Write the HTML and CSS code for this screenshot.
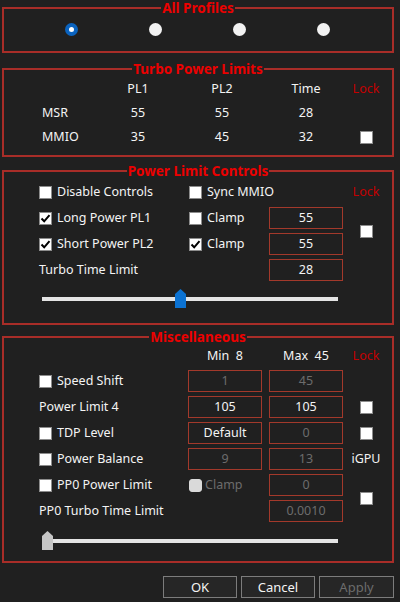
FILE: index.html
```html
<!DOCTYPE html>
<html>
<head>
<meta charset="utf-8">
<title>Power Settings</title>
<link rel="stylesheet" href="styles.css">
</head>
<body>
<div class="app">
  <fieldset class="group g-profiles">
    <legend>All Profiles</legend>
    <div class="radios">
      <span class="radio on"></span>
      <span class="radio"></span>
      <span class="radio"></span>
      <span class="radio"></span>
    </div>
  </fieldset>

  <fieldset class="group g-turbo">
    <legend>Turbo Power Limits</legend>
    <div class="tgrid">
      <span></span><span class="c">PL1</span><span class="c">PL2</span><span class="c">Time</span><span class="c lock">Lock</span>
      <span>MSR</span><span class="c">55</span><span class="c">55</span><span class="c">28</span><span></span>
      <span>MMIO</span><span class="c">35</span><span class="c">45</span><span class="c">32</span><span class="c"><span class="cb"></span></span>
    </div>
  </fieldset>

  <fieldset class="group g-controls">
    <legend>Power Limit Controls</legend>
    <div class="pgrid">
      <label class="chk"><span class="cb"></span>Disable Controls</label>
      <label class="chk span2"><span class="cb"></span>Sync MMIO</label>
      <span class="c lock">Lock</span>

      <label class="chk"><span class="cb on"><svg viewBox="0 0 11 11" width="11" height="11"><path d="M1.5 5.5 L4.2 8.3 L9.5 2.2" fill="none" stroke="#000" stroke-width="2"/></svg></span>Long Power PL1</label>
      <label class="chk"><span class="cb"></span>Clamp</label>
      <span class="field">55</span>
      <span class="c lockbox"><span class="cb"></span></span>

      <label class="chk"><span class="cb on"><svg viewBox="0 0 11 11" width="11" height="11"><path d="M1.5 5.5 L4.2 8.3 L9.5 2.2" fill="none" stroke="#000" stroke-width="2"/></svg></span>Short Power PL2</label>
      <label class="chk"><span class="cb on"><svg viewBox="0 0 11 11" width="11" height="11"><path d="M1.5 5.5 L4.2 8.3 L9.5 2.2" fill="none" stroke="#000" stroke-width="2"/></svg></span>Clamp</label>
      <span class="field">55</span>

      <span class="txt span2">Turbo Time Limit</span>
      <span class="field">28</span>
      <span></span>

      <div class="slider full">
        <div class="track"></div>
        <svg class="thumb blue" width="11" height="19" viewBox="0 0 11 19"><path d="M0 5 L5.5 0 L11 5 V19 H0 Z"/></svg>
      </div>
    </div>
  </fieldset>

  <fieldset class="group g-misc">
    <legend>Miscellaneous</legend>
    <div class="mgrid">
      <span></span><span class="c hdr">Min  8</span><span class="c hdr">Max  45</span><span class="c lock">Lock</span>

      <label class="chk"><span class="cb"></span>Speed Shift</label>
      <span class="field dis">1</span><span class="field dis">45</span><span></span>

      <span class="txt">Power Limit 4</span>
      <span class="field">105</span><span class="field">105</span><span class="c"><span class="cb"></span></span>

      <label class="chk"><span class="cb"></span>TDP Level</label>
      <span class="field">Default</span><span class="field dis">0</span><span class="c"><span class="cb"></span></span>

      <label class="chk"><span class="cb"></span>Power Balance</label>
      <span class="field dis">9</span><span class="field dis">13</span><span class="c">iGPU</span>

      <label class="chk"><span class="cb"></span>PP0 Power Limit</label>
      <label class="chk dis-chk"><span class="cb off"></span>Clamp</label>
      <span class="field dis">0</span>
      <span class="c lockbox"><span class="cb"></span></span>

      <span class="txt span2">PP0 Turbo Time Limit</span>
      <span class="field dis">0.0010</span>

      <div class="slider full">
        <div class="track"></div>
        <svg class="thumb gray" width="11" height="19" viewBox="0 0 11 19"><path d="M0 5 L5.5 0 L11 5 V19 H0 Z"/></svg>
      </div>
    </div>
  </fieldset>

  <div class="buttons">
    <button class="btn">OK</button>
    <button class="btn">Cancel</button>
    <button class="btn apply" disabled>Apply</button>
  </div>
</div>
</body>
</html>
```

FILE: styles.css
```css
* { box-sizing: border-box; }
html, body { margin: 0; padding: 0; background: #202020; }
body {
  width: 400px;
  height: 602px;
  overflow: hidden;
  font-family: "Noto Sans", "Open Sans", sans-serif;
  font-size: 12.5px;
  line-height: 16px;
  color: #f4f4f4;
}
.app { margin-left: 2px; padding-top: 1px; width: 392px; }

.group {
  margin: 0;
  padding: 0;
  min-width: 0;
  border: 2px solid #a82d28;
}
.group legend {
  margin: 0 auto;
  padding: 0 1px;
  font-family: "Noto Sans", sans-serif;
  font-weight: bold;
  font-size: 13.5px;
  line-height: 14px;
  color: #ec0000;
}

.g-profiles { padding: 8px 0 15px; }
.radios {
  display: flex;
  justify-content: space-between;
  padding: 0 62px 0 61px;
}
.radio {
  width: 13px;
  height: 13px;
  border-radius: 50%;
  background: #f2f2f2;
  display: flex;
  align-items: center;
  justify-content: center;
}
.radio.on { background: #0a63bf; }
.radio.on::after {
  content: "";
  width: 5px;
  height: 5px;
  border-radius: 50%;
  background: #fff;
}

.g-turbo { margin-top: 9px; padding: 1px 0 6px 0; }
.tgrid {
  display: grid;
  margin-left: 38px;
  grid-template-columns: 54px 84px 84px 84px 36px;
  grid-auto-rows: 24px;
  align-items: center;
}
.c { text-align: center; display: flex; justify-content: center; align-items: center; }
.lock { color: #c40000; }

.cb {
  width: 13px;
  height: 13px;
  flex: none;
  background: #fff;
  border: 1px solid #8c8c8c;
  display: inline-flex;
  align-items: center;
  justify-content: center;
}
.cb svg { display: block; }
.cb.off { background: #dadada; border-color: #dadada; border-radius: 3px; }

.chk { display: flex; align-items: center; gap: 5px; white-space: nowrap; }
.dis-chk { color: #6c6c6c; margin-left: 1px; gap: 3px; }
.txt { white-space: nowrap; }

.field {
  height: 22px;
  border: 1px solid #a3392b;
  text-align: center;
  line-height: 20px;
  white-space: nowrap;
}
.field.dis { color: #6c6c6c; }

.g-controls { margin-top: 7px; padding: 1px 0 10px 0; }
.pgrid {
  display: grid;
  margin-left: 35px;
  grid-template-columns: 143px 73px 74px 32px;
  column-gap: 7px;
  grid-template-rows: 26px 26px 26px 26px 30px;
  align-items: center;
}
.span2 { grid-column: span 2; }
.g-controls .lockbox { grid-row: 2 / 4; grid-column: 4; }
.full { grid-column: 1 / -1; }

.slider { position: relative; height: 19px; }
.track {
  position: absolute;
  left: 3px;
  top: 8px;
  width: 296px;
  height: 4px;
  background: #e4e4e4;
}
.thumb { position: absolute; top: 0; }
.thumb.blue { left: 136px; fill: #0b72d2; }
.thumb.gray { left: 3px; fill: #c6c6c6; }

.g-misc { margin-top: 5px; padding: 0 0 5px 0; }
.mgrid {
  display: grid;
  margin-left: 35px;
  grid-template-columns: 142px 74px 74px 32px;
  column-gap: 7px;
  grid-template-rows: 24px repeat(6, 26px) 32px;
  align-items: center;
}
.hdr { white-space: pre; }
.g-misc .lockbox { grid-row: 6 / 8; grid-column: 4; }

.buttons {
  margin-top: 13px;
  display: flex;
  justify-content: flex-end;
  gap: 4px;
}
.btn {
  width: 74px;
  height: 22px;
  padding: 0;
  background: #262626;
  border: 1px solid #7c7c7c;
  color: #f4f4f4;
  font-family: "Noto Sans", "Open Sans", sans-serif;
  font-size: 13px;
  line-height: 18px;
}
.btn.apply { width: 75px; color: #6c6c6c; }
```
